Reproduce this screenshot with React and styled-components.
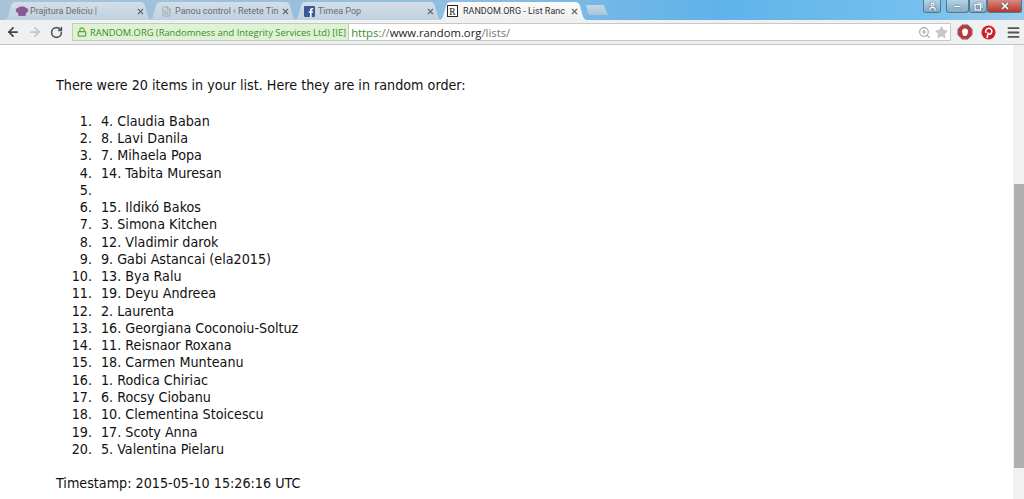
import React from "react";
import styled, { createGlobalStyle } from "styled-components";
import { ArrowLeft, ArrowRight, RotateCw, Lock, FileText, Star, ZoomIn, Menu, User, Minus, X } from "lucide-react";

const Global = createGlobalStyle`
  html, body { margin: 0; padding: 0; height: 499px; overflow: hidden; background: #fff; }
  #root { height: 499px; }
`;
const Page = styled.div`
  width: 1024px; height: 499px; display: flex; flex-direction: column; overflow: hidden;
  font-family: "DejaVu Sans Condensed", "DejaVu Sans", sans-serif; color: #1a1a1a;
`;
const TitleBar = styled.div`
  height: 20px; flex: none; display: flex; align-items: flex-end; padding-left: 4px;
  background: linear-gradient(90deg, #a9c3d8 0%, #8ebde0 45%, #5fb3ea 70%, #74c0ee 90%, #9ccbe8 100%);
`;
const Tab = styled.div`
  width: 148px; height: 18px; margin-right: -3px; flex: none; display: flex; align-items: center; gap: ${p => p.$gap || 3}px;
  padding: 0 ${p => p.$pr || 7}px 0 ${p => p.$pl}px; box-sizing: border-box;
  color: ${p => (p.$active ? "#333" : "#6b6b6b")};
  background: ${p => (p.$active ? "linear-gradient(#fafafa,#eef0f2)" : "linear-gradient(#d3dfe9,#bfd0de)")};
  clip-path: path("M0 18 C3 18 4 15 5 11 L7 4 C8 1 9 0 12 0 L136 0 C139 0 140 1 141 4 L143 11 C144 15 145 18 148 18 Z");
`;
const TabTitle = styled.span`
  flex: 1; white-space: nowrap; font: 9px Roboto, sans-serif; min-width: 0;
`;
const TabClose = styled(X)` flex: none; color: #666; `;
const NewTab = styled.div`
  width: 22px; height: 10px; margin-left: 2px; margin-bottom: 5px; background: linear-gradient(#c4d8e6,#a9c4d8);
  clip-path: polygon(0 0, 80% 0, 100% 100%, 12% 100%);
`;
const WindowControls = styled.div`
  margin-left: auto; align-self: flex-start; display: flex; gap: 5px; margin-right: 2px;
`;
const Ctl = styled.div`
  height: 13px; display: flex; align-items: center; justify-content: center; box-sizing: border-box;
  width: ${p => p.$w}px; background: ${p => p.$bg || "linear-gradient(#b5d3e6,#86aac4)"};
  border: 1px solid #54788f; border-top: 0; border-radius: 0 0 3px 3px; color: #fff;
  svg { filter: drop-shadow(0 0 1px #3a5568); }
`;
const CtlGroup = styled.div` display: flex; `;
const Toolbar = styled.div`
  height: 25px; flex: none; display: flex; align-items: center; background: #eef0f2; border-bottom: 1px solid #c4c4c4; padding-left: 6px; box-sizing: border-box;
`;
const NavIcon = styled.div`
  width: 22px; display: flex; color: ${p => p.$c || "#555"};
`;
const Omnibox = styled.div`
  width: 879px; height: 18px; display: flex; align-items: center; background: #fff; border: 1px solid #c8c8c8; box-sizing: border-box;
`;
const Ev = styled.div`
  height: 16px; display: flex; align-items: center; gap: 3px; padding: 0 2px 0 4px; background: #dff3d3; border-right: 1px solid #b4d6a2; color: #3c8a32;
  font: 9.35px "Open Sans", sans-serif; white-space: nowrap;
`;
const Url = styled.div`
  font: 11.3px "Open Sans", sans-serif; margin-left: 2px; color: #777; flex: 1; white-space: nowrap;
`;
const Https = styled.span` color: #3c8a32; `;
const Host = styled.span` color: #222; `;
const RightIcons = styled.div` display: flex; align-items: center; gap: 4px; padding-right: 2px; color: #a5a5a5; `;
const Ext = styled.div`
  display: flex; margin-left: ${p => p.$ml || 0}px;
`;
const Body = styled.div` flex: 1; display: flex; min-height: 0; `;
const Content = styled.main`
  flex: 1; padding: 32px 0 0 56px; font-size: 14.2px; line-height: 17.26px; color: #111;
`;
const Para = styled.p` margin: 0; `;
const List = styled.ol` margin: 18.5px 0 17px; padding: 0 0 0 40px; `;
const Item = styled.li` padding-left: 5px; `;
const Track = styled.div`
  width: 11px; flex: none; background: #f1f1f1; padding: 139px 0 0 1px; box-sizing: border-box;
`;
const Thumb = styled.div` height: 284px; background: #b0b0b0; `;

const items = ["4. Claudia Baban","8. Lavi Danila","7. Mihaela Popa","14. Tabita Muresan","","15. Ildikó Bakos","3. Simona Kitchen","12. Vladimir darok","9. Gabi Astancai (ela2015)","13. Bya Ralu","19. Deyu Andreea","2. Laurenta","16. Georgiana Coconoiu-Soltuz","11. Reisnaor Roxana","18. Carmen Munteanu","1. Rodica Chiriac","6. Rocsy Ciobanu","10. Clementina Stoicescu","17. Scoty Anna","5. Valentina Pielaru"];

const Chef = () => (<svg width="14" height="11" viewBox="0 0 14 11"><path d="M3 7C0 6 0 2 3 2 4 0 10 0 11 2c3 0 3 4 0 5l-.5 3h-7z" fill="#8a5a92"/></svg>);
const Fb = () => (<svg width="11" height="11" viewBox="0 0 11 11"><rect width="11" height="11" rx="1" fill="#3b5998"/><path d="M7.6 11V6.8h1.3l.2-1.6H7.6v-1c0-.5.2-.8.8-.8h.8V2c-.3 0-.7-.1-1.2-.1-1.2 0-2 .7-2 2.100v1.200H4.800v1.600H6V11z" fill="#fff"/></svg>);
const RLogo = () => (<svg width="11" height="12" viewBox="0 0 11 12"><rect x=".5" y=".5" width="10" height="11" fill="#fff" stroke="#222"/><text x="5.500" y="9.500" fontSize="9.500" fontFamily="Liberation Serif" textAnchor="middle" fill="#111">R</text></svg>);
const Stop = () => (<svg width="16" height="16" viewBox="0 0 16 16"><path d="M5 .8h6L15.200 5v6L11 15.200H5L.8 11V5z" fill="#b93a38" stroke="#8d8d8d" strokeWidth=".8"/><path d="M5 7.500C5 6 6 5 6.500 5.500L7 4.500h2L10 5.500c.8 0 1.200.8 1 2l-.5 2.500C10 11.500 9 12 8 12s-2-.5-2.300-1.500z" fill="#fff"/></svg>);
const Pin = () => (<svg width="15" height="15" viewBox="0 0 15 15"><circle cx="7.500" cy="7.500" r="7" fill="#cb2027"/><path d="M6 13l1.300-5.500M5 8C3.800 5.300 5.800 3.300 7.800 3.300c2.100 0 3.200 1.400 3 3.200-.2 1.800-1.400 3-2.700 2.700-.7-.2-1-.6-1.100-1" fill="none" stroke="#fff" strokeWidth="1.600"/></svg>);

export default function App() {
  return (
    <Page>
      <Global />
      <TitleBar>
        <Tab $pl={11} $gap={1}><Chef /><TabTitle>Prajitura Deliciu |</TabTitle><TabClose size={9} strokeWidth={3} /></Tab>
        <Tab $pl={12}><FileText size={11} color="#9aa" /><TabTitle>Panou control ‹ Retete Tin</TabTitle><TabClose size={9} strokeWidth={3} /></Tab>
        <Tab $pl={10}><Fb /><TabTitle>Timea Pop</TabTitle><TabClose size={9} strokeWidth={3} /></Tab>
        <Tab $active $pl={8} $pr={8} $gap={5}><RLogo /><TabTitle>RANDOM.ORG - List Ranc</TabTitle><TabClose size={9} strokeWidth={3} /></Tab>
        <NewTab />
        <WindowControls>
          <Ctl $w={18}><User size={9} strokeWidth={3} /></Ctl>
          <CtlGroup>
            <Ctl $w={23}><Minus size={9} strokeWidth={3} /></Ctl>
            <Ctl $w={18}><svg width="9" height="9" viewBox="0 0 9 9"><rect x="1" y="2.500" width="5.500" height="5.500" fill="none" stroke="#fff" strokeWidth="1.200"/><path d="M3 1h5v5" fill="none" stroke="#fff"/></svg></Ctl>
            <Ctl $w={35} $bg="linear-gradient(#d98a80,#b5372c)"><X size={10} strokeWidth={4} /></Ctl>
          </CtlGroup>
        </WindowControls>
      </TitleBar>
      <Toolbar>
        <NavIcon $c="#444"><ArrowLeft size={14} strokeWidth={3} /></NavIcon>
        <NavIcon $c="#c4c4c4"><ArrowRight size={14} strokeWidth={3} /></NavIcon>
        <NavIcon $c="#555"><RotateCw size={13} strokeWidth={3} /></NavIcon>
        <Omnibox>
          <Ev><Lock size={10} strokeWidth={3} color="#5da83f" />RANDOM.ORG (Randomness and Integrity Services Ltd) [IE]</Ev>
          <Url><Https>https:</Https>//<Host>www.random.org</Host>/lists/</Url>
          <RightIcons><ZoomIn size={13} strokeWidth={2} /><Star size={13} fill="#c8c8c8" color="#c8c8c8" /></RightIcons>
        </Omnibox>
        <Ext $ml={6}><Stop /></Ext>
        <Ext $ml={8}><Pin /></Ext>
        <Ext $ml={10}><Menu size={15} strokeWidth={3} color="#555" /></Ext>
      </Toolbar>
      <Body>
        <Content>
          <Para>There were 20 items in your list. Here they are in random order:</Para>
          <List>{items.map((t, i) => <Item key={i}>{t || "\u00a0"}</Item>)}</List>
          <Para>Timestamp: 2015-05-10 15:26:16 UTC</Para>
        </Content>
        <Track><Thumb /></Track>
      </Body>
    </Page>
  );
}
